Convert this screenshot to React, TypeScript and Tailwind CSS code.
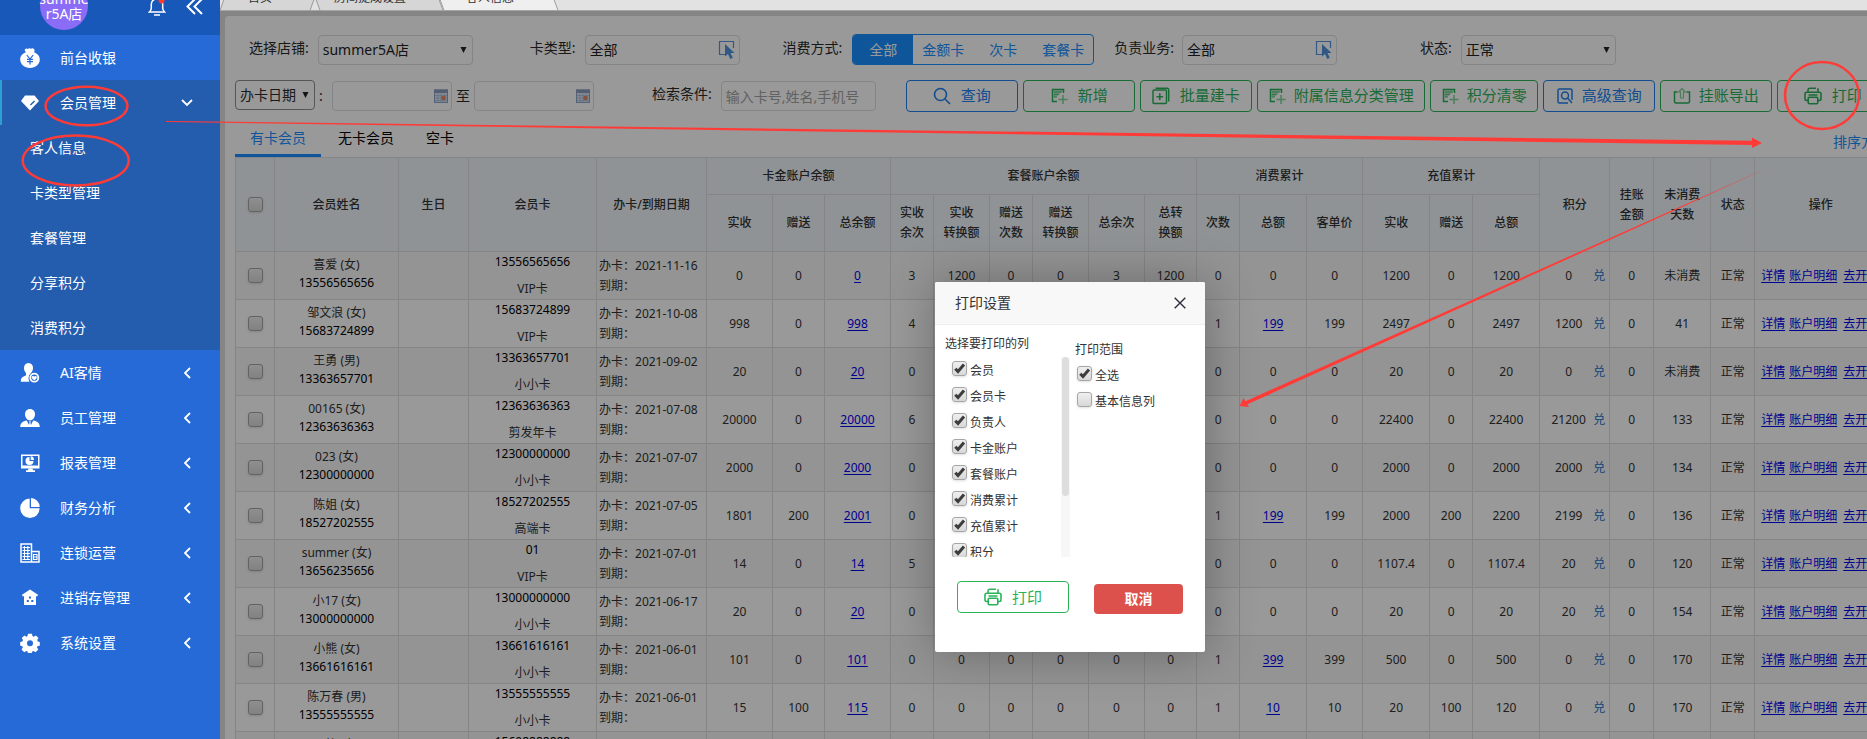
import React, { useState } from "react";

const FONT = "font-['Noto_Sans','Noto_Sans_CJK_SC',sans-serif]";

/* ---------- icons ---------- */

type IconProps = { className?: string };

const MoneyBagIcon = () => (
  <svg viewBox="0 0 20 20" className="size-5" fill="currentColor" aria-hidden="true">
    <path d="M5 1.2c1-1 2-.8 2.700-.2.9-1 2.200-1.200 3.200-.2.900-.8 2.300-.7 3.100.2.900 1 .600 2.100 0 3.300 3.400 1.200 5.800 3.800 5.800 7.200 0 4.700-4.200 8.500-9.800 8.500S.2 16.200.2 11.500c0-3.400 2.300-6 5.700-7.200C5 3.200 4.300 2.200 5 1.200Z" />
    <path d="m6.800 7 3.200 4 3.200-4M10 11v5.500M7 11.300h6M7 13.700h6" stroke="#256ad6" strokeWidth="1.200" fill="none" />
  </svg>
);
const DiamondIcon = () => (
  <svg viewBox="0 0 20 20" className="size-5" fill="currentColor" aria-hidden="true">
    <path d="M5 2.500h9.500L19 8l-9 9.500L1 8Z" />
    <path d="m10.500 12 4-4" stroke="#245cae" strokeWidth="1.500" fill="none" />
  </svg>
);
const UserHeartIcon = () => (
  <svg viewBox="0 0 20 20" className="size-5" fill="currentColor" aria-hidden="true">
    <path d="M8.500 0C11.500 0 13 2.200 13 5c0 2-.8 3.800-2 5v1.300A5.700 5.700 0 0 0 9.500 18.800H1c-.4-3.300.5-4.800 5-6.300V10C4.800 8.800 4 7 4 5c0-2.800 1.500-5 4.500-5Z" />
    <circle cx="14.300" cy="14.700" r="5.700" fill="#256ad6" />
    <circle cx="14.300" cy="14.700" r="4" fill="none" stroke="currentColor" strokeWidth="1.800" />
    <path d="M14.300 17.200c-1.800-1.200-2.500-2-2.500-3 0-1.300 1.700-1.600 2.500-.6.800-1 2.500-.7 2.500.6 0 1-.7 1.800-2.500 3Z" />
  </svg>
);
const UserTieIcon = () => (
  <svg viewBox="0 0 20 20" className="size-5" fill="currentColor" aria-hidden="true">
    <path d="M10 1c3.200 0 5 2.300 5 5.300 0 3.200-2.200 6.200-5 6.200S5 9.500 5 6.300C5 3.300 6.800 1 10 1Z" />
    <path d="M6.800 12.500 9 17l.6-2.500-.6-1.200h2l-.6 1.200.6 2.500 2.200-4.500c4 .8 6.400 2.200 6.600 6.500H.2c.2-4.300 2.600-5.700 6.600-6.500Z" />
  </svg>
);
const MonitorIcon = () => (
  <svg viewBox="0 0 20 20" className="size-5" fill="currentColor" aria-hidden="true">
    <path d="M1 1.500h18.500v14H1Zm1.500 1.400v9.600H18V2.900Z" fillRule="evenodd" />
    <path d="M9.500 4v4h4A4 4 0 1 1 9.500 4Z" />
    <path d="M10.700 3.300A3.700 3.700 0 0 1 14 7h-3.300ZM8.500 15.500h4l.5 1.800h2V19H6v-1.700h2Z" />
  </svg>
);
const PieIcon = () => (
  <svg viewBox="0 0 20 20" className="size-5" fill="currentColor" aria-hidden="true">
    <path d="M9.700.6v9.700h9.900A9.700 9.700 0 1 1 9.700.6Z" />
    <path d="M11 .1A9.200 9.200 0 0 1 19.700 9H11Z" />
  </svg>
);
const BuildingIcon = () => (
  <svg viewBox="0 0 20 20" className="size-5" fill="none" stroke="currentColor" aria-hidden="true">
    <path d="M1 19V1h10.500v18M11.500 8.500H19V19H.3" strokeWidth="1.500" />
    <path d="M2.500 4.500H10M2.500 7.500H10M2.500 10.500H10M2.500 13.500H10M2.500 16.500H10M4.500 3v14M7.800 3v14M13 11.500h4.500M13 14h4.500M13 16.500h4.500M13.500 11v6M17 11v6" strokeWidth="1.100" />
  </svg>
);
const HouseIcon = () => (
  <svg viewBox="0 0 20 20" className="size-5" fill="currentColor" aria-hidden="true">
    <path d="m10 1.500 8 5.300-.6 1.400H16V17H4V8.200H2.500L2 6.800Z" />
    <path d="M9 8.500h2v2H9ZM6.800 12h2v2h-2ZM11.300 12h2v2h-2Z" fill="#256ad6" />
  </svg>
);
const GearIcon = () => (
  <svg viewBox="0 0 20 20" className="size-5" fill="currentColor" aria-hidden="true">
    <path fillRule="evenodd" d="M8 .8h4l.4 2.300 1.400.6 2-1.300 2.700 2.700-1.300 2 .6 1.400 2 .4v3.800l-2.200.4-.6 1.400 1.300 2-2.700 2.700-2-1.300-1.400.6-.4 2H8l-.4-2-1.400-.6-2 1.300-2.700-2.700 1.300-2-.6-1.400-2-.4V8.900l2.200-.4.600-1.400-1.300-2 2.700-2.700 2 1.300 1.100-.6ZM10 7.300a3 3 0 1 0 0 6 3 3 0 0 0 0-6Z" />
  </svg>
);
const ChevronLeft = () => (
  <svg viewBox="0 0 8 12" className="mr-px h-3 w-2" fill="none" stroke="currentColor" strokeWidth="1.800" aria-hidden="true">
    <path d="M7 1 2 6l5 5" />
  </svg>
);
const ChevronDown = () => (
  <svg viewBox="0 0 12 8" className="h-2 w-3" fill="none" stroke="currentColor" strokeWidth="1.800" aria-hidden="true">
    <path d="m1 1 5 5 5-5" />
  </svg>
);
const SearchIcon = () => (
  <svg viewBox="0 0 18 18" className="size-[18px]" fill="none" stroke="currentColor" strokeWidth="1.600" aria-hidden="true">
    <circle cx="7.500" cy="7.500" r="6" />
    <path d="m12 12 5 5" />
  </svg>
);
const FormPlusIcon = () => (
  <svg viewBox="0 0 18 18" className="size-[18px]" fill="none" stroke="currentColor" aria-hidden="true">
    <path d="M13.500 6V2.500h-11v12H7" strokeWidth="1.500" />
    <path d="M3.500 3.500h9.500L6 10.500H3.500Z" fill="currentColor" stroke="none" opacity=".4" />
    <path d="M4 5h8M4 7.500h5M4 10h3" strokeWidth="1.200" opacity=".6" />
    <path d="M13 8v9M8.500 12.500h9" strokeWidth="1.500" opacity=".6" />
  </svg>
);
const StackPlusIcon = () => (
  <svg viewBox="0 0 18 18" className="size-[18px]" fill="none" stroke="currentColor" strokeWidth="1.500" aria-hidden="true">
    <rect x="1" y="3" width="13.500" height="13.500" rx="1" />
    <path d="M3.500 1.200h11.500c1 0 1.700.7 1.700 1.700v11.500M4.500 9.700h6.600M7.800 6.300v6.700" />
  </svg>
);
const AdvancedIcon = () => (
  <svg viewBox="0 0 18 18" className="size-[18px]" fill="none" stroke="currentColor" strokeWidth="1.500" aria-hidden="true">
    <path d="M12 16H3.500C2.500 16 2 15.500 2 14.500v-11C2 2.500 2.500 2 3.500 2h11c1 0 1.500.5 1.500 1.500V13" />
    <circle cx="9" cy="8.500" r="3.500" />
    <path d="m11.500 11 4.500 5" />
  </svg>
);
const ExportIcon = () => (
  <svg viewBox="0 0 18 18" className="size-[18px]" fill="none" stroke="currentColor" strokeWidth="1.500" aria-hidden="true">
    <path d="M4.500 5H1.500v9.500c0 1 .5 1.500 1.500 1.500h12c1 0 1.500-.5 1.500-1.500V5h-3" />
    <path d="M9 1.500 5.800 5h1.700v6h3V5h1.700Z" strokeWidth="1.200" opacity=".6" />
  </svg>
);
const PrinterIcon = ({ className = "" }: IconProps) => (
  <svg viewBox="0 0 18 18" className={`size-[18px] ${className}`} fill="none" stroke="currentColor" strokeWidth="1.600" aria-hidden="true">
    <path d="M4 5V3c0-1 .5-1.700 1.500-1.700h6.500M14 1.300V5" />
    <path d="M4.200 13.500H2.700c-1 0-1.700-.7-1.700-1.700V7c0-1 .7-1.700 1.700-1.700h12.600c1 0 1.700.7 1.700 1.700v4.800c0 1-.7 1.700-1.700 1.700h-1.500M4.500 8h9" />
    <rect x="4.200" y="10.300" width="9.600" height="6.400" rx="1.200" />
  </svg>
);
const PickIcon = () => (
  <svg viewBox="0 0 18 20" className="h-5 w-[18px] shrink-0" fill="none" aria-hidden="true">
    <path d="M7 14.500H1.500v-13h14V8" stroke="#5b93dd" strokeWidth="1.200" />
    <path d="M7 4v12.500l3-2.500 2.300 5 2.500-1.200-2.300-4.800h4Z" fill="#4f93dc" />
  </svg>
);
const CalendarIcon = () => (
  <svg viewBox="0 0 14 14" className="size-3.5 shrink-0" aria-hidden="true">
    <rect x=".5" y="1" width="13" height="12.500" fill="#dfe8f5" stroke="#8ba3c9" />
    <path d="M0 .5h14V4H0Z" fill="#8b9dbd" />
    <path d="M1 6.500h12M1 9h12M1 11.500h12M4 4.500v9M7 4.500v9M10 4.500v9" stroke="#a9bbd9" strokeWidth=".8" />
    <rect x="7.500" y="7" width="4" height="4" fill="#e08a70" />
  </svg>
);
const CaretIcon = () => (
  <svg viewBox="0 0 8 7" className="pointer-events-none h-[6px] w-[7px]" fill="#222" aria-hidden="true">
    <path d="M.5 0h7L4 7Z" />
  </svg>
);

/* ---------- small controls ---------- */

function Check({ label, checked = false, name }: { label?: string; checked?: boolean; name: string }) {
  return (
    <label className="inline-flex items-start gap-[3px]">
      <span className="relative inline-flex size-[15px]">
        <input
          type="checkbox"
          aria-label={label ? undefined : name}
          defaultChecked={checked}
          className="peer size-[15px] appearance-none rounded-[3px] border border-[#a6a6a6] bg-linear-to-b from-[#efefef] to-[#d8d8d8] shadow-sm"
        />
        <svg viewBox="0 0 15 15" className="pointer-events-none absolute inset-0 hidden size-[15px] peer-checked:block" fill="none" stroke="#3c3c3c" strokeWidth="3" aria-hidden="true">
          <path d="m3.300 7.800 2.700 2.800 6-7" />
        </svg>
      </span>
      {label && <span className="pt-[2px] leading-4">{label}</span>}
    </label>
  );
}

function Field({ id, label, gap, children }: { id: string; label: string; gap: string; children: React.ReactNode }) {
  return (
    <div className={`flex shrink-0 items-center whitespace-nowrap ${gap}`}>
      <label htmlFor={id} className="pb-1">{label}</label>
      {children}
    </div>
  );
}

function SelectBox({ id, value }: { id: string; value: string }) {
  return (
    <div className="relative flex w-[155px] items-center">
      <select id={id} className="h-[30px] w-full appearance-none rounded border border-[#dcdcdc] px-1 text-[#222]">
        <option>{value}</option>
      </select>
      <span className="pointer-events-none absolute right-1.5"><CaretIcon /></span>
    </div>
  );
}

function PickBox({ id }: { id: string }) {
  return (
    <div className="flex h-[30px] w-[155px] items-center rounded border border-[#dcdcdc] pr-[3px] pl-1">
      <input id={id} defaultValue="全部" className="min-w-0 flex-1 bg-transparent text-[#222] outline-none" />
      <PickIcon />
    </div>
  );
}

function DateBox({ label }: { label: string }) {
  return (
    <div className="flex h-[30px] w-[120px] shrink-0 items-center rounded border border-[#dcdcdc] px-[3px]">
      <input aria-label={label} className="min-w-0 flex-1 bg-transparent outline-none" />
      <CalendarIcon />
    </div>
  );
}

function ActionButton({ icon, label, blue, size }: { icon: React.ReactNode; label: string; blue?: boolean; size: string }) {
  return (
    <button
      type="button"
      className={`flex h-8 shrink-0 items-center justify-center rounded border text-[15px] whitespace-nowrap ${size} ${
        blue ? "border-[#2080f0] text-[#2080f0]" : "border-[#2bb35a] text-[#2bb35a]"
      }`}
    >
      {icon}
      <span>{label}</span>
    </button>
  );
}

/* ---------- data ---------- */

const submenu = ["客人信息", "卡类型管理", "套餐管理", "分享积分", "消费积分"];
const menu: [string, React.ReactNode][] = [
  ["AI客情", <UserHeartIcon />],
  ["员工管理", <UserTieIcon />],
  ["报表管理", <MonitorIcon />],
  ["财务分析", <PieIcon />],
  ["连锁运营", <BuildingIcon />],
  ["进销存管理", <HouseIcon />],
  ["系统设置", <GearIcon />],
];

type Row = { name: string; phone: string; card: string; kind: string; date: string; n: string[] };

// n: 卡金(3) 套餐(6) 消费(3) 充值(3) 积分 挂账 天数
const rows: Row[] = [
  { name: "喜爱 (女)", phone: "13556565656", card: "13556565656", kind: "VIP卡", date: "2021-11-16", n: ["0", "0", "0", "3", "1200", "0", "0", "3", "1200", "0", "0", "0", "1200", "0", "1200", "0", "0", "未消费"] },
  { name: "邹文浪 (女)", phone: "15683724899", card: "15683724899", kind: "VIP卡", date: "2021-10-08", n: ["998", "0", "998", "4", "0", "0", "0", "4", "0", "1", "199", "199", "2497", "0", "2497", "1200", "0", "41"] },
  { name: "王勇 (男)", phone: "13363657701", card: "13363657701", kind: "小小卡", date: "2021-09-02", n: ["20", "0", "20", "0", "0", "0", "0", "0", "0", "0", "0", "0", "20", "0", "20", "0", "0", "未消费"] },
  { name: "00165 (女)", phone: "12363636363", card: "12363636363", kind: "剪发年卡", date: "2021-07-08", n: ["20000", "0", "20000", "6", "0", "0", "0", "6", "0", "0", "0", "0", "22400", "0", "22400", "21200", "0", "133"] },
  { name: "023 (女)", phone: "12300000000", card: "12300000000", kind: "小小卡", date: "2021-07-07", n: ["2000", "0", "2000", "0", "0", "0", "0", "0", "0", "0", "0", "0", "2000", "0", "2000", "2000", "0", "134"] },
  { name: "陈姐 (女)", phone: "18527202555", card: "18527202555", kind: "高端卡", date: "2021-07-05", n: ["1801", "200", "2001", "0", "0", "0", "0", "0", "0", "1", "199", "199", "2000", "200", "2200", "2199", "0", "136"] },
  { name: "summer (女)", phone: "13656235656", card: "01", kind: "VIP卡", date: "2021-07-01", n: ["14", "0", "14", "5", "0", "0", "0", "5", "0", "0", "0", "0", "1107.4", "0", "1107.4", "20", "0", "120"] },
  { name: "小17 (女)", phone: "13000000000", card: "13000000000", kind: "小小卡", date: "2021-06-17", n: ["20", "0", "20", "0", "0", "0", "0", "0", "0", "0", "0", "0", "20", "0", "20", "20", "0", "154"] },
  { name: "小熊 (女)", phone: "13661616161", card: "13661616161", kind: "小小卡", date: "2021-06-01", n: ["101", "0", "101", "0", "0", "0", "0", "0", "0", "1", "399", "399", "500", "0", "500", "0", "0", "170"] },
  { name: "陈万春 (男)", phone: "13555555555", card: "13555555555", kind: "小小卡", date: "2021-06-01", n: ["15", "100", "115", "0", "0", "0", "0", "0", "0", "1", "10", "10", "20", "100", "120", "0", "0", "170"] },
  { name: "周竹 (女)", phone: "15698888888", card: "15698888888", kind: "小小卡", date: "2021-06-01", n: ["0", "0", "0", "0", "0", "0", "0", "0", "0", "0", "0", "0", "0", "0", "0", "0", "0", "170"] },
];

const printColumns = ["会员", "会员卡", "负责人", "卡金账户", "套餐账户", "消费累计", "充值累计", "积分"];

/* ---------- regions ---------- */

function Sidebar() {
  return (
    <aside className="flex w-[220px] shrink-0 flex-col bg-[#256ad6] text-sm text-white">
      <header className="flex h-[35px] shrink-0 items-end justify-end overflow-hidden bg-[#1758b9] pl-10">
        <div className="mb-[5px] flex size-12 shrink-0 flex-col items-center justify-center rounded-full bg-[#8a6cf6] text-sm leading-[15px]">
          <span>summe</span>
          <span>r5A店</span>
        </div>
        <button type="button" aria-label="通知" className="relative mb-[19px] ml-auto">
          <svg viewBox="0 0 18 20" className="h-5 w-[18px]" fill="none" stroke="currentColor" strokeWidth="1.500" aria-hidden="true">
            <path d="M1.500 16h15c-1.300-1.200-1.800-2-1.800-4V8.500C14.700 5 12.500 3 9 3S3.300 5 3.300 8.500V12c0 2-.5 2.800-1.800 4ZM6 19h6" />
            <circle cx="13.500" cy="4.500" r="3" fill="#ff3b30" stroke="none" />
          </svg>
        </button>
        <button type="button" aria-label="收起菜单" className="mr-[17px] mb-5 ml-5">
          <svg viewBox="0 0 17 17" className="size-[17px]" fill="none" stroke="currentColor" strokeWidth="2" aria-hidden="true">
            <path d="M9 1 1.500 8.500 9 16M16 1 8.500 8.500 16 16" />
          </svg>
        </button>
      </header>
      <nav>
        <a href="#cashier" className="flex h-[45px] items-center gap-5 pl-5"><MoneyBagIcon />前台收银</a>
        <div className="bg-[#245cae]">
          <a href="#members" className="flex h-[45px] items-center border-l-2 border-[#2f9fcf] pr-[27px] pl-[18px]">
            <DiamondIcon />
            <span className="flex-1 pl-5">会员管理</span>
            <ChevronDown />
          </a>
          {submenu.map((s) => (
            <a key={s} href={`#${s}`} className="flex h-[45px] items-center pl-[30px]">{s}</a>
          ))}
        </div>
        {menu.map(([label, icon]) => (
          <a key={label} href={`#${label}`} className="flex h-[45px] items-center pr-7 pl-5">
            {icon}
            <span className="flex-1 pl-5">{label}</span>
            <ChevronLeft />
          </a>
        ))}
      </nav>
    </aside>
  );
}

function TabBar() {
  const base = "relative flex h-6 shrink-0 items-center gap-4 text-xs text-[#333] before:absolute before:inset-0 before:-z-10 before:border-x before:border-[#9c9c9c]";
  return (
    <div className="isolate flex h-[11px] shrink-0 items-end overflow-hidden border-b border-[#a5a5a5] bg-[#e2e2e2] pl-1 whitespace-nowrap">
      <button type="button" className={`${base} w-[91px] pl-6 before:skew-x-[-20deg] before:bg-[#d6d6d6]`}>首页</button>
      <button type="button" className={`${base} w-[124px] pl-[19px] before:skew-x-[20deg] before:bg-[#d6d6d6]`}>房间提成设置<span className="text-[#999]">×</span></button>
      <button type="button" className={`${base} w-[115px] pl-[27px] before:skew-x-[20deg] before:bg-[#efefef]`}>客人信息<span className="text-[#999]">×</span></button>
    </div>
  );
}

function Filters() {
  return (
    <form className="flex flex-col text-sm text-[#2b2b2b]" onSubmit={(e) => e.preventDefault()}>
      <div className="mt-[18px] flex h-[31px] items-center pl-6">
        <Field id="shop" label="选择店铺:" gap="gap-[9px]"><SelectBox id="shop" value="summer5A店" /></Field>
        <div className="ml-[57px] shrink-0"><Field id="type" label="卡类型:" gap="gap-[9px]"><PickBox id="type" /></Field></div>
        <div className="ml-[43px] flex shrink-0 items-center gap-2.5">
          <span className="pb-1">消费方式:</span>
          <div className="flex h-[31px] w-[242px] items-stretch overflow-hidden rounded border border-[#1890ff] text-[#1890ff]">
            <button type="button" className="w-[60px] bg-[#1890ff] text-white">全部</button>
            <button type="button" className="flex-1">金额卡</button>
            <button type="button" className="flex-1">次卡</button>
            <button type="button" className="flex-1">套餐卡</button>
          </div>
        </div>
        <div className="ml-5 shrink-0"><Field id="owner" label="负责业务:" gap="gap-2"><PickBox id="owner" /></Field></div>
        <div className="ml-[83px] shrink-0"><Field id="state" label="状态:" gap="gap-[9px]"><SelectBox id="state" value="正常" /></Field></div>
      </div>
      <div className="mt-[15px] flex h-8 items-center pl-2.5">
        <div className="relative mb-0.5 flex w-20 shrink-0 items-center">
          <select aria-label="日期类型" className="h-[30px] w-full appearance-none rounded border border-[#8f8f8f] pl-1">
            <option>办卡日期</option>
          </select>
          <span className="pointer-events-none absolute right-1.5"><CaretIcon /></span>
        </div>
        <span className="w-[17px] shrink-0 pl-1">:</span>
        <DateBox label="开始日期" />
        <span className="shrink-0 px-1">至</span>
        <DateBox label="结束日期" />
        <div className="ml-[58px] shrink-0">
          <Field id="query" label="检索条件:" gap="gap-[9px]">
            <input id="query" placeholder="输入卡号,姓名,手机号" className="h-[30px] w-[155px] rounded border border-[#dcdcdc] px-1 placeholder:text-[#a3a3a3]" />
          </Field>
        </div>
        <div className="ml-[30px] flex gap-[5px]">
          <ActionButton icon={<SearchIcon />} label="查询" blue size="w-28 gap-2.5" />
          <ActionButton icon={<FormPlusIcon />} label="新增" size="w-28 gap-2.5" />
          <ActionButton icon={<StackPlusIcon />} label="批量建卡" size="w-28 gap-2.5" />
          <ActionButton icon={<FormPlusIcon />} label="附属信息分类管理" size="w-[168px] gap-2" />
          <ActionButton icon={<FormPlusIcon />} label="积分清零" size="w-[108px] gap-2" />
          <ActionButton icon={<AdvancedIcon />} label="高级查询" blue size="w-28 gap-2" />
          <ActionButton icon={<ExportIcon />} label="挂账导出" size="w-28 gap-2" />
          <ActionButton icon={<PrinterIcon />} label="打印" size="w-28 gap-2.5" />
        </div>
      </div>
    </form>
  );
}

function MemberTable() {
  const th = "border border-[#dedede] font-medium leading-5";
  const td = "border border-[#dedede]";
  const link = "text-[#0000ee] underline underline-offset-2";
  const cols = [39, 124, 70, 128, 110, 66, 52, 66, 43, 56, 43, 56, 56, 52, 43, 67, 56, 67, 43, 67, 70, 44, 57, 44, 132];
  return (
    <table className="w-[1652px] table-fixed border-collapse text-center text-xs text-[#333]">
      <colgroup>{cols.map((w, i) => <col key={i} style={{ width: w }} />)}</colgroup>
      <thead className="bg-[#eff5fa]">
        <tr className="h-[37px]">
          <th rowSpan={2} className={th}><span className="flex justify-center"><Check name="全选会员" /></span></th>
          <th rowSpan={2} className={th}>会员姓名</th>
          <th rowSpan={2} className={th}>生日</th>
          <th rowSpan={2} className={th}>会员卡</th>
          <th rowSpan={2} className={th}>办卡/到期日期</th>
          <th colSpan={3} className={th}>卡金账户余额</th>
          <th colSpan={6} className={th}>套餐账户余额</th>
          <th colSpan={3} className={th}>消费累计</th>
          <th colSpan={3} className={th}>充值累计</th>
          <th rowSpan={2} className={th}>积分</th>
          <th rowSpan={2} className={th}>挂账<br />金额</th>
          <th rowSpan={2} className={th}>未消费<br />天数</th>
          <th rowSpan={2} className={th}>状态</th>
          <th rowSpan={2} className={th}>操作</th>
        </tr>
        <tr className="h-[57px]">
          <th className={th}>实收</th>
          <th className={th}>赠送</th>
          <th className={th}>总余额</th>
          <th className={th}>实收<br />余次</th>
          <th className={th}>实收<br />转换额</th>
          <th className={th}>赠送<br />次数</th>
          <th className={th}>赠送<br />转换额</th>
          <th className={th}>总余次</th>
          <th className={th}>总转<br />换额</th>
          <th className={th}>次数</th>
          <th className={th}>总额</th>
          <th className={th}>客单价</th>
          <th className={th}>实收</th>
          <th className={th}>赠送</th>
          <th className={th}>总额</th>
        </tr>
      </thead>
      <tbody>
        {rows.map((r) => (
          <tr key={r.name} className="h-12 odd:bg-[#f7f7f7]">
            <td className={td}><span className="flex justify-center"><Check name={r.name} /></span></td>
            <td className={`${td} pb-1 leading-[18px]`}>{r.name}<br /><span className="text-black">{r.phone}</span></td>
            <td className={td} />
            <td className={td}>
              <div className="flex flex-col gap-[7px] leading-5"><span className="text-black">{r.card}</span><span>{r.kind}</span></div>
            </td>
            <td className={`${td} pl-0.5 text-left leading-5 whitespace-nowrap`}>办卡：{r.date}<br />到期：</td>
            {r.n.map((v, i) => (
              <td key={i} className={td}>
                {i === 2 || (i === 10 && v !== "0") ? (
                  <a href="#detail" className={link}>{v}</a>
                ) : i === 15 ? (
                  <span className="flex items-center pr-1"><span className="flex-1 pl-1">{v}</span><a href="#redeem" className="text-[#1470cc]">兑</a></span>
                ) : (
                  v
                )}
              </td>
            ))}
            <td className={td}>正常</td>
            <td className={`${td} pl-1.5 text-left whitespace-nowrap`}>
              <span className="flex gap-1">
                <a href="#info" className={link}>详情</a>
                <a href="#account" className={link}>账户明细</a>
                <a href="#open" className={`${link} ml-0.5`}>去开单</a>
              </span>
            </td>
          </tr>
        ))}
      </tbody>
    </table>
  );
}

function PrintDialog() {
  return (
    <section role="dialog" aria-label="打印设置" className="absolute top-[282px] left-[935px] flex h-[370px] w-[270px] flex-col rounded-[2px] bg-white text-xs text-[#333] shadow-[1px_1px_50px_rgba(0,0,0,0.3)]">
      <header className="flex h-[43px] shrink-0 items-center justify-between rounded-t-[2px] border-b border-[#eee] bg-[#f8f8f8] pr-[19px] pl-5">
        <h2 className="text-sm">打印设置</h2>
        <button type="button" aria-label="关闭">
          <svg viewBox="0 0 12 12" className="size-3" fill="none" stroke="#2e2d3c" strokeWidth="1.400" aria-hidden="true">
            <path d="m.7.7 10.600 10.600M11.300.7.7 11.300" />
          </svg>
        </button>
      </header>
      <div className="flex pl-2.5">
        <div className="w-[125px] pt-[9px]">
          <h3 className="h-[23px] leading-5">选择要打印的列</h3>
          <div className="flex h-[200px]">
            <ul className="flex-1 overflow-hidden pt-1 pl-[7px]">
              {printColumns.map((c) => (
                <li key={c} className="h-[26px]"><Check label={c} name={c} checked /></li>
              ))}
            </ul>
            <div className="w-[9px] bg-[#f7f7f7] px-px">
              <div className="h-[139px] rounded-full bg-[#dddddd]" />
            </div>
          </div>
        </div>
        <div className="pt-[15px] pl-[5px]">
          <h3 className="h-[26px] leading-5">打印范围</h3>
          <ul className="pl-0.5">
            <li className="h-[26px]"><Check label="全选" name="全选" checked /></li>
            <li className="h-[26px]"><Check label="基本信息列" name="基本信息列" /></li>
          </ul>
        </div>
      </div>
      <footer className="mt-[23px] flex items-center gap-[25px] pl-[22px]">
        <button type="button" className="flex h-8 w-28 items-center justify-center gap-2.5 rounded border border-[#2bb35a] text-[15px] text-[#2bb35a]"><PrinterIcon />打印</button>
        <button type="button" className="mt-1 h-[30px] w-[89px] rounded bg-[#dd514c] text-sm font-bold text-white">取消</button>
      </footer>
    </section>
  );
}

function Annotations() {
  return (
    <svg viewBox="0 0 1867 739" className="pointer-events-none absolute top-0 left-0 h-[739px] w-[1867px]" fill="none" aria-hidden="true">
      <g stroke="#ff3b37" strokeWidth="2.500">
        <ellipse cx="86.500" cy="106" rx="41" ry="19.300" />
        <ellipse cx="75.700" cy="160.500" rx="53" ry="25" />
        <ellipse cx="1822" cy="95.500" rx="37" ry="33.500" />
      </g>
      <g fill="#ff3b37">
        <path d="M166 121 1752 140.800V137.500L1762 143 1752 148V145L166 122Z" />
        <path d="M1761 170.500 1245.500 401.200 1243.500 398 1239.500 406 1249 407 1247.500 404.300 1761 171.300Z" fill="url(#fade)" />
      </g>
      <defs>
        <linearGradient id="fade" x1="1761" y1="171" x2="1240" y2="406" gradientUnits="userSpaceOnUse">
          <stop offset="0" stopColor="#ff3b37" stopOpacity=".2" />
          <stop offset=".15" stopColor="#ff3b37" />
        </linearGradient>
      </defs>
    </svg>
  );
}

export default function App() {
  const [tab, setTab] = useState(0);
  return (
    <div className={`relative flex h-screen overflow-hidden ${FONT}`}>
      <Sidebar />
      <div className="flex min-w-0 flex-1 flex-col">
        <TabBar />
        <main className="relative flex min-h-0 flex-1 flex-col overflow-hidden bg-[#dedede] pt-[5px] pl-[5px]">
          <div className="flex-1 overflow-hidden rounded-tl-sm bg-white">
            <Filters />
            <div className="flex h-[45px] items-end justify-between overflow-hidden pl-2.5 text-sm whitespace-nowrap">
              <div role="tablist" className="flex">
                {["有卡会员", "无卡会员", "空卡"].map((t, i) => (
                  <button
                    key={t}
                    type="button"
                    role="tab"
                    aria-selected={tab === i}
                    onClick={() => setTab(i)}
                    className={`h-9 border-b-[3px] px-[15px] text-center ${tab === i ? "border-[#1890ff] text-[#1890ff]" : "border-transparent"} ${i === 0 ? "w-[86px]" : ""} ${i === 1 ? "w-[90px]" : ""}`}
                  >
                    {t}
                  </button>
                ))}
              </div>
              <a href="#sort" className="-mr-[22px] mb-[5px] text-[#1890ff]">排序方式</a>
            </div>
            <div className="overflow-hidden pl-2.5"><MemberTable /></div>
          </div>
          <div className="absolute inset-0 bg-black/40" />
        </main>
      </div>
      <PrintDialog />
      <Annotations />
    </div>
  );
}
